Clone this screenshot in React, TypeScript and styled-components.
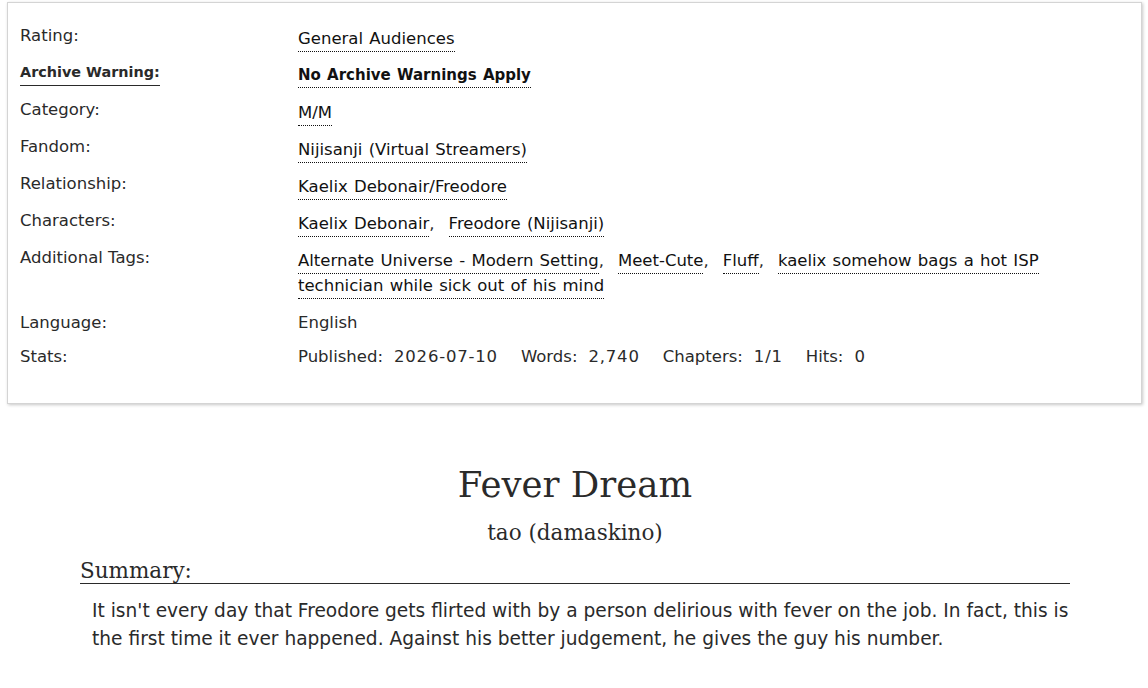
import styled, { createGlobalStyle } from "styled-components";

const GlobalStyle = createGlobalStyle`
  body {
    margin: 0;
    background: #fff;
    color: #2a2a2a;
    font-family: "DejaVu Sans", "Open Sans", sans-serif;
  }
`;

type Tag = { label: string };

type MetaRow = {
  label: string;
  strong?: boolean;
  tags?: Tag[];
  text?: string;
  stats?: [string, string][];
};

const META: MetaRow[] = [
  { label: "Rating:", tags: [{ label: "General Audiences" }] },
  { label: "Archive Warning:", strong: true, tags: [{ label: "No Archive Warnings Apply" }] },
  { label: "Category:", tags: [{ label: "M/M" }] },
  { label: "Fandom:", tags: [{ label: "Nijisanji (Virtual Streamers)" }] },
  { label: "Relationship:", tags: [{ label: "Kaelix Debonair/Freodore" }] },
  {
    label: "Characters:",
    tags: [{ label: "Kaelix Debonair" }, { label: "Freodore (Nijisanji)" }],
  },
  {
    label: "Additional Tags:",
    tags: [
      { label: "Alternate Universe - Modern Setting" },
      { label: "Meet-Cute" },
      { label: "Fluff" },
      { label: "kaelix somehow bags a hot ISP technician while sick out of his mind" },
    ],
  },
  { label: "Language:", text: "English" },
  {
    label: "Stats:",
    stats: [
      ["Published:", "2026-07-10"],
      ["Words:", "2,740"],
      ["Chapters:", "1/1"],
      ["Hits:", "0"],
    ],
  },
];

const MetaBox = styled.div`
  margin: 2px 6px 0 7px;
  padding: 23px 40px 25px 12px;
  border: 1px solid #d4d4d4;
  box-shadow: 1px 1px 3px rgba(0, 0, 0, 0.22);
  background: #fff;
`;

const MetaList = styled.dl`
  display: grid;
  grid-template-columns: 278px 1fr;
  margin: 0;
  font-size: 16.5px;
`;

const Label = styled.dt<{ $strong?: boolean; $plain?: boolean }>`
  margin: 0 0 ${(p) => (p.$plain ? "9px" : "12px")};
  line-height: ${(p) => (p.$plain ? "25px" : "19px")};
  align-self: start;
  justify-self: start;
  font-weight: ${(p) => (p.$strong ? "bold" : "normal")};
  border-bottom: ${(p) => (p.$strong ? "1px solid #2a2a2a" : "none")};
  padding-bottom: ${(p) => (p.$strong ? "3px" : "0")};
  font-size: ${(p) => (p.$strong ? "14.4px" : "inherit")};
`;

const Value = styled.dd<{ $strong?: boolean; $plain?: boolean }>`
  margin: 0 0 ${(p) => (p.$plain ? "9px" : "12px")};
  line-height: 25px;
  word-spacing: 1px;
  font-weight: ${(p) => (p.$strong ? "bold" : "normal")};
  font-size: ${(p) => (p.$strong ? "15px" : "inherit")};
`;

const TagLink = styled.a`
  color: #111;
  text-decoration: none;
  border-bottom: 1px dotted #111;
  padding-bottom: 3px;
`;

const Comma = styled.span`
  margin-right: 14px;
`;

const StatName = styled.span`
  margin-right: 11px;
`;

const StatValue = styled.span`
  margin-right: 23px;
  letter-spacing: 0.8px;
`;

const Preface = styled.div`
  margin: 59px 78px 0 80px;
`;

const Title = styled.h2`
  margin: 0;
  text-align: center;
  font-family: "DejaVu Serif", Georgia, serif;
  font-weight: normal;
  font-size: 35.5px;
  line-height: 44px;
  color: #2a2a2a;
`;

const Byline = styled.h3`
  margin: 11px 0 0;
  text-align: center;
  font-family: "DejaVu Serif", Georgia, serif;
  font-weight: normal;
  font-size: 21.5px;
  line-height: 30px;
  color: #2a2a2a;
`;

const SummaryHeading = styled.h3`
  margin: 11px 0 0;
  font-family: "DejaVu Serif", Georgia, serif;
  font-weight: normal;
  font-size: 21.5px;
  line-height: 24px;
  border-bottom: 1px solid #2a2a2a;
  color: #2a2a2a;
`;

const SummaryText = styled.p`
  margin: 13px 0 0 12px;
  font-size: 18.6px;
  line-height: 28px;
  color: #2a2a2a;
`;

export default function App() {
  return (
    <>
      <GlobalStyle />
      <MetaBox>
        <MetaList>
          {META.map((row) => (
            <>
              <Label key={row.label} $strong={row.strong} $plain={!row.tags}>
                {row.label}
              </Label>
              <Value $strong={row.strong} $plain={!row.tags}>
                {row.tags &&
                  row.tags.map((tag, i) => (
                    <span key={tag.label}>
                      <TagLink href="#">{tag.label}</TagLink>
                      {i < row.tags!.length - 1 && <Comma>,</Comma>}
                    </span>
                  ))}
                {row.text}
                {row.stats &&
                  row.stats.map(([name, value]) => (
                    <span key={name}>
                      <StatName>{name}</StatName>
                      <StatValue>{value}</StatValue>
                    </span>
                  ))}
              </Value>
            </>
          ))}
        </MetaList>
      </MetaBox>
      <Preface>
        <Title>Fever Dream</Title>
        <Byline>tao (damaskino)</Byline>
        <SummaryHeading>Summary:</SummaryHeading>
        <SummaryText>
          It isn't every day that Freodore gets flirted with by a person delirious with fever
          on the job. In fact, this is the first time it ever happened. Against his better
          judgement, he gives the guy his number.
        </SummaryText>
      </Preface>
    </>
  );
}
